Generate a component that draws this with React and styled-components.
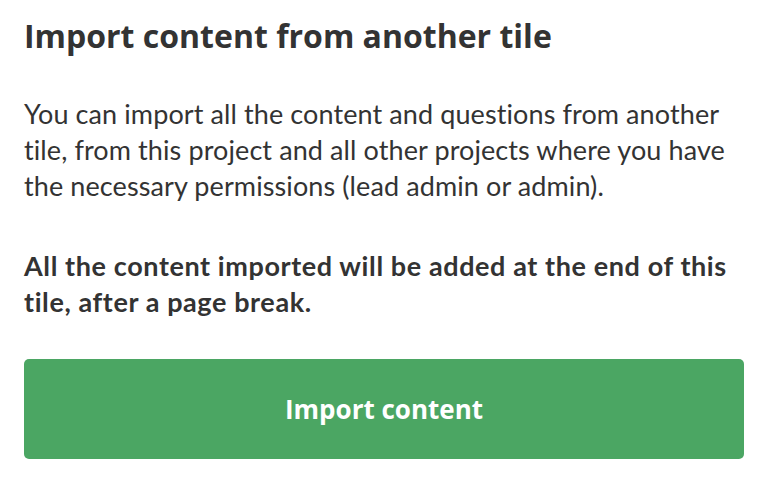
import React from "react";
import styled, { createGlobalStyle } from "styled-components";

const Global = createGlobalStyle`
  html, body { margin: 0; padding: 0; background: #fff; }
  body { font-family: Lato, "Liberation Sans", sans-serif; color: #333; }
`;

const Panel = styled.section`
  width: 764px;
  box-sizing: border-box;
  padding: 16px 20px 0 24px;
`;

const Title = styled.h1`
  margin: 0;
  font-family: "Open Sans", "Liberation Sans", sans-serif;
  font-size: 32px;
  line-height: 40px;
  font-weight: 700;
  color: #333;
`;

const Text = styled.p`
  margin: ${p => p.$top}px 0 0;
  font-size: 27px;
  line-height: 36px;
  font-weight: ${p => (p.$bold ? 700 : 400)};
  letter-spacing: ${p => (p.$bold ? "0.6px" : "0.1px")};
  color: #333;
`;

const Button = styled.button`
  display: flex;
  align-items: center;
  justify-content: center;
  width: 720px;
  height: 100px;
  margin-top: 39px;
  border: none;
  border-radius: 5px;
  background: #4ba663;
  color: #fff;
  font-family: "Open Sans", "Liberation Sans", sans-serif;
  font-size: 26px;
  font-weight: 700;
  cursor: pointer;
`;

export default function App() {
  return (
    <>
      <Global />
      <Panel>
        <Title>Import content from another tile</Title>
        <Text $top={40}>
          You can import all the content and questions from another tile, from this project
          and all other projects where you have the necessary permissions (lead admin or admin).
        </Text>
        <Text $top={44} $bold>
          All the content imported will be added at the end of this tile, after a page break.
        </Text>
        <Button>Import content</Button>
      </Panel>
    </>
  );
}
